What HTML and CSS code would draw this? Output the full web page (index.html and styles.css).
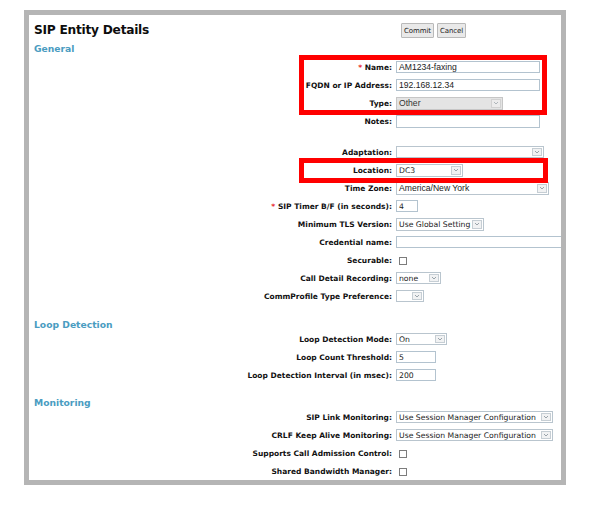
FILE: index.html
```html
<!DOCTYPE html>
<html>
<head>
<meta charset="utf-8">
<link rel="stylesheet" href="styles.css">
</head>
<body>
<div class="frame">
  <div class="header">
    <h1 class="title">SIP Entity Details</h1>
    <div class="buttons">
      <button class="btn">Commit</button>
      <button class="btn">Cancel</button>
    </div>
  </div>
  <h2 class="section first">General</h2>

  <div class="row"><span class="lbl"><span class="req">*</span> Name:</span><div class="fld"><span class="txt w144 arial">AM1234-faxing</span></div></div>
  <div class="row"><span class="lbl">FQDN or IP Address:</span><div class="fld"><span class="txt w144 arial">192.168.12.34</span></div></div>
  <div class="row"><span class="lbl">Type:</span><div class="fld"><span class="sel disabled w107 arial"><span class="val">Other</span><span class="arr"><svg viewBox="0 0 8 8" width="8" height="8"><polyline points="2,3 4,5 6,3" fill="none" stroke="#a8b0b6" stroke-width="0.9"/></svg></span></span></div></div>
  <div class="row"><span class="lbl">Notes:</span><div class="fld"><span class="txt w144 tall"></span></div></div>

  <div class="row gap13"><span class="lbl">Adaptation:</span><div class="fld"><span class="sel w148 short"><span class="val"></span><span class="arr"><svg viewBox="0 0 8 8" width="8" height="8"><polyline points="2,3 4,5 6,3" fill="none" stroke="#8f9aa2" stroke-width="0.9"/></svg></span></span></div></div>
  <div class="row"><span class="lbl">Location:</span><div class="fld"><span class="sel w67"><span class="val">DC3</span><span class="arr"><svg viewBox="0 0 8 8" width="8" height="8"><polyline points="2,3 4,5 6,3" fill="none" stroke="#8f9aa2" stroke-width="0.9"/></svg></span></span></div></div>
  <div class="row"><span class="lbl">Time Zone:</span><div class="fld"><span class="sel w153 arial"><span class="val">America/New York</span><span class="arr"><svg viewBox="0 0 8 8" width="8" height="8"><polyline points="2,3 4,5 6,3" fill="none" stroke="#8f9aa2" stroke-width="0.9"/></svg></span></span></div></div>
  <div class="row"><span class="lbl"><span class="req">*</span> SIP Timer B/F (in seconds):</span><div class="fld"><span class="txt w22">4</span></div></div>
  <div class="row"><span class="lbl">Minimum TLS Version:</span><div class="fld"><span class="sel w88"><span class="val">Use Global Setting</span><span class="arr"><svg viewBox="0 0 8 8" width="8" height="8"><polyline points="2,3 4,5 6,3" fill="none" stroke="#8f9aa2" stroke-width="0.9"/></svg></span></span></div></div>
  <div class="row"><span class="lbl">Credential name:</span><div class="fld"><span class="txt w170"></span></div></div>
  <div class="row"><span class="lbl">Securable:</span><div class="fld"><span class="chk"></span></div></div>
  <div class="row"><span class="lbl">Call Detail Recording:</span><div class="fld"><span class="sel w45 short"><span class="val">none</span><span class="arr"><svg viewBox="0 0 8 8" width="8" height="8"><polyline points="2,3 4,5 6,3" fill="none" stroke="#8f9aa2" stroke-width="0.9"/></svg></span></span></div></div>
  <div class="row"><span class="lbl">CommProfile Type Preference:</span><div class="fld"><span class="sel w28 short"><span class="val"></span><span class="arr"><svg viewBox="0 0 8 8" width="8" height="8"><polyline points="2,3 4,5 6,3" fill="none" stroke="#8f9aa2" stroke-width="0.9"/></svg></span></span></div></div>

  <h2 class="section loop">Loop Detection</h2>
  <div class="row"><span class="lbl">Loop Detection Mode:</span><div class="fld"><span class="sel w51 short"><span class="val">On</span><span class="arr"><svg viewBox="0 0 8 8" width="8" height="8"><polyline points="2,3 4,5 6,3" fill="none" stroke="#8f9aa2" stroke-width="0.9"/></svg></span></span></div></div>
  <div class="row"><span class="lbl">Loop Count Threshold:</span><div class="fld"><span class="txt w40">5</span></div></div>
  <div class="row"><span class="lbl">Loop Detection Interval (in msec):</span><div class="fld"><span class="txt w40">200</span></div></div>

  <h2 class="section mon">Monitoring</h2>
  <div class="row"><span class="lbl">SIP Link Monitoring:</span><div class="fld"><span class="sel w157 short"><span class="val">Use Session Manager Configuration</span><span class="arr"><svg viewBox="0 0 8 8" width="8" height="8"><polyline points="2,3 4,5 6,3" fill="none" stroke="#8f9aa2" stroke-width="0.9"/></svg></span></span></div></div>
  <div class="row"><span class="lbl">CRLF Keep Alive Monitoring:</span><div class="fld"><span class="sel w157 short"><span class="val">Use Session Manager Configuration</span><span class="arr"><svg viewBox="0 0 8 8" width="8" height="8"><polyline points="2,3 4,5 6,3" fill="none" stroke="#8f9aa2" stroke-width="0.9"/></svg></span></span></div></div>
  <div class="row"><span class="lbl">Supports Call Admission Control:</span><div class="fld"><span class="chk"></span></div></div>
  <div class="row"><span class="lbl">Shared Bandwidth Manager:</span><div class="fld"><span class="chk"></span></div></div>
</div>

<div class="callout c1"></div>
<div class="callout c2"></div>
</body>
</html>
```

FILE: styles.css
```css
* { box-sizing: border-box; }
html, body { margin: 0; padding: 0; background: #ffffff; }
body {
  width: 590px;
  height: 506px;
  position: relative;
  overflow: hidden;
  font-family: "DejaVu Sans", Verdana, sans-serif;
  color: #1e1e1e;
}
.frame {
  margin: 10px 0 0 24px;
  width: 542px;
  height: 475px;
  border: 5px solid #b5b5b5;
  overflow: hidden;
  background: #ffffff;
}
.header {
  display: grid;
  grid-template-columns: 363px 1fr;
  column-gap: 4px;
  height: 29px;
  align-items: center;
}
.title {
  margin: 0 0 0 5px;
  font-size: 12.2px;
  font-weight: bold;
  color: #0d0d0d;
  line-height: 30px;
  letter-spacing: -0.25px;
}
.buttons {
  display: flex;
  gap: 3px;
  padding-left: 5px;
  padding-top: 1px;
}
.btn {
  font-family: "DejaVu Sans", Verdana, sans-serif;
  font-size: 7px;
  height: 15px;
  padding: 0 2px;
  border: 1px solid #b9b9b9;
  background: #e9e9e9;
  color: #222;
  border-radius: 1px;
  letter-spacing: -0.1px;
}
.section {
  margin: 0 0 0 5px;
  font-size: 9.2px;
  font-weight: bold;
  color: #4a9cc1;
  line-height: 10px;
  height: 10px;
}
.section.first { margin-bottom: 4px; }
.section.loop { margin-top: 15px; }
.section.mon { margin-top: 14px; }
.row {
  display: grid;
  grid-template-columns: 363px 1fr;
  column-gap: 4px;
  height: 18px;
  align-items: center;
}
.row.gap13 { margin-top: 13px; }
.lbl {
  text-align: right;
  font-size: 7.5px;
  font-weight: bold;
  color: #111;
  white-space: nowrap;
}
.req { color: #e8262b; }
.fld {
  display: flex;
  align-items: center;
  white-space: nowrap;
}
.txt {
  display: flex;
  align-items: center;
  height: 12px;
  border: 1px solid #b3c3cf;
  background: #fff;
  padding-left: 2px;
  font-size: 7.7px;
  color: #222;
  overflow: hidden;
}
.txt.tall { height: 13px; }
.sel {
  display: flex;
  align-items: stretch;
  height: 13px;
  border: 1px solid #b9c5ce;
  background: #fff;
  font-size: 7.7px;
  color: #222;
  overflow: hidden;
}
.sel.short { height: 12px; }
.sel .val {
  flex: 1;
  display: flex;
  align-items: center;
  padding-left: 2px;
  overflow: hidden;
}
.sel .arr {
  width: 10px;
  flex-shrink: 0;
  margin: 1px;
  border: 1px solid #c6ced4;
  background: #f1f2f3;
  display: flex;
  align-items: center;
  justify-content: center;
}
.sel.disabled { background: #e4e4e4; border-color: #c6c6c6; color: #333; }
.sel.disabled .arr { background: #ececec; border-color: #d2d2d2; }
.arial { font-family: "Liberation Sans", Arial, sans-serif; font-size: 8.6px; }
.chk {
  display: block;
  width: 8px;
  height: 8px;
  margin-left: 3px;
  margin-top: 1px;
  border: 1px solid #7c7c7c;
  background: #fff;
}
.w22 { width: 22px; }
.w28 { width: 28px; }
.w40 { width: 40px; }
.w45 { width: 45px; }
.w51 { width: 51px; }
.w67 { width: 67px; }
.w88 { width: 88px; }
.w107 { width: 107px; }
.w144 { width: 144px; }
.w148 { width: 148px; }
.w153 { width: 153px; }
.w157 { width: 157px; }
.w170 { width: 170px; flex-shrink: 0; }
.callout {
  position: absolute;
  border: 5px solid #ff0000;
  pointer-events: none;
}
.c1 { left: 299px; top: 55px; width: 248px; height: 60px; }
.c2 { left: 299px; top: 158px; width: 249px; height: 25px; }
```
